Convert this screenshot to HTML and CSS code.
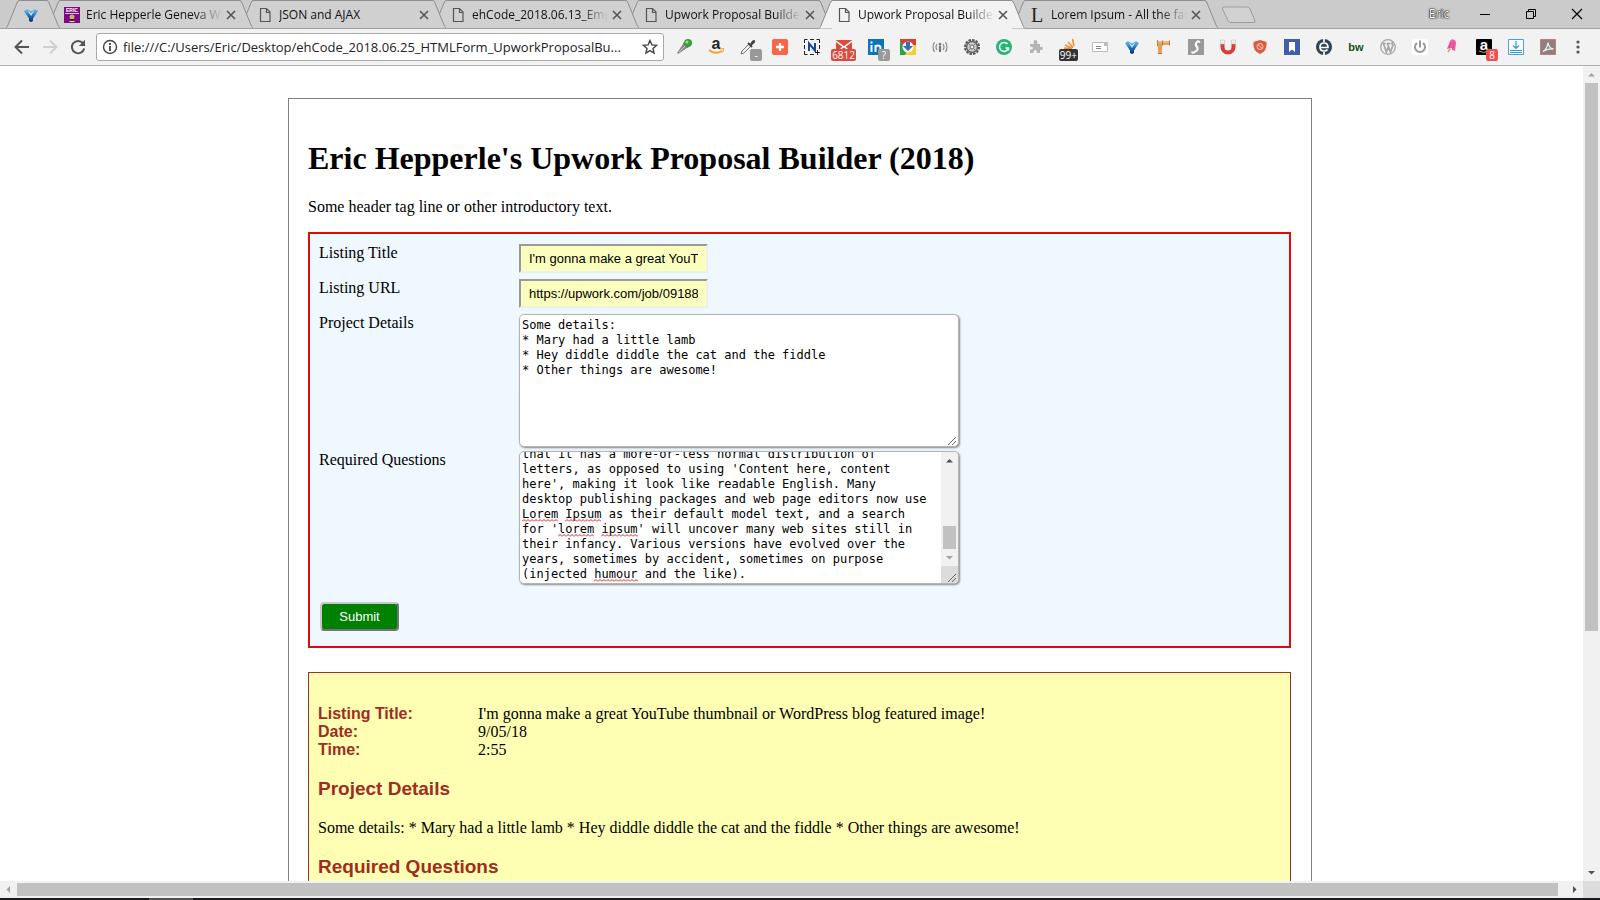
FILE: index.html
```html
<!DOCTYPE html>
<html lang="en">
<head>
<meta charset="utf-8">
<title>Upwork Proposal Builder</title>
<link rel="stylesheet" href="styles.css">
</head>
<body>
<svg class="defs" aria-hidden="true">
  <linearGradient id="blue" x1="0" y1="0" x2="0" y2="1"><stop offset="0" stop-color="#7cc4f2"/><stop offset=".5" stop-color="#1c74c4"/><stop offset="1" stop-color="#0a2a5c"/></linearGradient>
  <symbol id="gem" viewBox="0 0 16 16"><path d="M1 4 4 2l4 2.500L12 2l3 2-5 7.500V14l-2 1-2-1v-2.500z" fill="url(#blue)"/><path d="M4.500 3.500 8 6l3.500-2.500L8 9z" fill="#bfe6ff"/></symbol>
  <symbol id="doc" viewBox="0 0 16 16"><path d="M3.500 1.500h6l3.500 3.500v9.500h-9.500zM9.500 1.500v4H13" fill="none" stroke="#555" stroke-width="1.200"/></symbol>
  <symbol id="close" viewBox="0 0 10 10"><path d="M1 1l8 8M9 1 1 9" stroke="#555" stroke-width="1.600"/></symbol>
  <symbol id="edge-l" viewBox="0 0 13 28"><path d="M0 28C1 27 1 27 2 25L11 3Q12 1 13 1V28z" fill="currentColor"/><path d="M0 28C1 27 1 27 2 25L11 3Q12 .500 13 .500" fill="none" stroke="#8e8e8e"/></symbol>
  <symbol id="edge-r" viewBox="0 0 13 28"><path d="M13 28C12 27 12 27 11 25L2 3Q1 1 0 1V28z" fill="currentColor"/><path d="M13 28C12 27 12 27 11 25L2 3Q1 .500 0 .500" fill="none" stroke="#8e8e8e"/></symbol>
</svg>

<header class="tabstrip">
  <nav class="tabs" aria-label="Tabs">
    <div class="tab pinned"><svg class="edge"><use href="#edge-l"/></svg><div class="tab-mid"><svg class="fav"><use href="#gem"/></svg></div><svg class="edge"><use href="#edge-r"/></svg></div>
    <div class="tab t2"><svg class="edge"><use href="#edge-l"/></svg><div class="tab-mid"><svg class="fav" viewBox="0 0 16 16"><path fill="#7d0a80" d="M0 0h16v16H0z"/><text x="8" y="5" font-size="5" font-weight="700" text-anchor="middle" fill="#fff">ERIC</text><path d="M1 6.500h14" stroke="#e3b6e3"/><circle cx="8" cy="10" r="2.500" fill="#c9b176"/><path d="M5 15q3-5 6 0z" fill="#e8e0d8"/><path d="M6 12h4v2H6z" fill="#3c2530"/></svg><span class="title">Eric Hepperle Geneva We</span><button class="x" aria-label="Close tab"><svg><use href="#close"/></svg></button></div><svg class="edge"><use href="#edge-r"/></svg></div>
    <div class="tab t3"><svg class="edge"><use href="#edge-l"/></svg><div class="tab-mid"><svg class="fav"><use href="#doc"/></svg><span class="title">JSON and AJAX</span><button class="x" aria-label="Close tab"><svg><use href="#close"/></svg></button></div><svg class="edge"><use href="#edge-r"/></svg></div>
    <div class="tab t4"><svg class="edge"><use href="#edge-l"/></svg><div class="tab-mid"><svg class="fav"><use href="#doc"/></svg><span class="title">ehCode_2018.06.13_Emp</span><button class="x" aria-label="Close tab"><svg><use href="#close"/></svg></button></div><svg class="edge"><use href="#edge-r"/></svg></div>
    <div class="tab t5"><svg class="edge"><use href="#edge-l"/></svg><div class="tab-mid"><svg class="fav"><use href="#doc"/></svg><span class="title">Upwork Proposal Builder</span><button class="x" aria-label="Close tab"><svg><use href="#close"/></svg></button></div><svg class="edge"><use href="#edge-r"/></svg></div>
    <div class="tab active"><svg class="edge"><use href="#edge-l"/></svg><div class="tab-mid"><svg class="fav"><use href="#doc"/></svg><span class="title">Upwork Proposal Builder</span><button class="x" aria-label="Close tab"><svg><use href="#close"/></svg></button></div><svg class="edge"><use href="#edge-r"/></svg></div>
    <div class="tab t7"><svg class="edge"><use href="#edge-l"/></svg><div class="tab-mid"><svg class="fav" viewBox="0 0 16 16"><text class="serif" x="8" y="15" font-size="20" text-anchor="middle" fill="#222">L</text></svg><span class="title">Lorem Ipsum - All the fac</span><button class="x" aria-label="Close tab"><svg><use href="#close"/></svg></button></div><svg class="edge"><use href="#edge-r"/></svg></div>
    <button class="newtab" aria-label="New tab"><svg viewBox="0 0 36 18"><path d="M3 1h23q2 0 3 2l5 12q.500 1.500-1 1.500H10q-2 0-3-2L1.500 3Q1 1 3 1z" fill="#d2d2d2" stroke="#9c9c9c"/></svg></button>
  </nav>
  <div class="window">
    <button class="user">Eric</button>
    <button aria-label="Minimize"><svg viewBox="0 0 12 12"><path d="M1 6.500h10" stroke="#000"/></svg></button>
    <button aria-label="Restore"><svg viewBox="0 0 12 12"><path d="M1.500 3.500h7v7h-7zM3.500 3.500v-2h7v7h-2" fill="none" stroke="#000"/></svg></button>
    <button aria-label="Close"><svg viewBox="0 0 12 12"><path d="M1 1l10 10M11 1 1 11" stroke="#000" stroke-width="1.200"/></svg></button>
  </div>
</header>

<div class="toolbar">
  <button class="nav" aria-label="Back"><svg viewBox="0 0 16 16"><path d="M15 8H2M8 1.500 1.500 8 8 14.500" fill="none" stroke="#555" stroke-width="2"/></svg></button>
  <button class="nav" aria-label="Forward"><svg viewBox="0 0 16 16"><path d="M1 8h13M8 1.500 14.500 8 8 14.500" fill="none" stroke="#d0d0d0" stroke-width="2"/></svg></button>
  <button class="nav" aria-label="Reload"><svg viewBox="0 0 16 16"><path d="M13 4.200A6.200 6.200 0 1 0 14.200 9.500" fill="none" stroke="#555" stroke-width="2"/><path d="M15 .800V7H8.800z" fill="#555"/></svg></button>
  <div class="address">
    <svg viewBox="0 0 16 16"><circle cx="8" cy="8" r="6.500" fill="none" stroke="#444" stroke-width="1.400"/><path d="M8 7v5M8 4v2" stroke="#444" stroke-width="1.800"/></svg>
    <input type="text" aria-label="Address" value="file:///C:/Users/Eric/Desktop/ehCode_2018.06.25_HTMLForm_UpworkProposalBu...">
    <button aria-label="Bookmark"><svg viewBox="0 0 16 16"><path d="m8 1.500 1.900 4.400 4.700.400-3.600 3.100 1.100 4.600L8 11.600 3.900 14l1.100-4.600-3.600-3.100 4.700-.400z" fill="none" stroke="#444" stroke-width="1.400"/></svg></button>
  </div>
  <div class="exts">
    <button aria-label="Microphone"><svg viewBox="0 0 16 16"><path d="m1 14 6-9 4 4-9 6z" fill="#888"/><path d="m3 13 6-6" stroke="#ccc"/><path d="m7 5 4 4 2-1-5-5z" fill="#555"/><circle cx="12" cy="4" r="4" fill="#3c9c3c"/><circle cx="11" cy="3" r="1.500" fill="#9edc8c"/></svg></button>
    <button aria-label="Amazon"><svg viewBox="0 0 16 16"><text x="8" y="10" font-size="16" font-weight="700" text-anchor="middle" fill="#222">a</text><path d="M1 11q6 5 13 1" fill="none" stroke="#f0a030" stroke-width="2"/><path d="m12 10 4-.500-1.500 4" fill="none" stroke="#f0a030"/></svg></button>
    <button aria-label="Color picker"><svg viewBox="0 0 16 16"><path d="m1 15 1-3 7-7 2 2-7 7z" fill="#eee" stroke="#777"/><path d="m8 4 4 4" stroke="#444" stroke-width="2"/><path d="m9.500 5.500 3-4q2-1 2.500 0 .500 1-.500 2.500l-3.500 3z" fill="#444"/></svg><span class="badge gray">-</span></button>
    <button aria-label="Add"><svg viewBox="0 0 16 16"><rect width="16" height="16" rx="2" fill="#fa6549"/><path d="M8 4v8M4 8h8" stroke="#fff" stroke-width="2.400"/></svg></button>
    <button aria-label="Nimbus"><svg viewBox="0 0 16 16"><path d="M.500 4V.500h3M6 .500h4M12.500.500h3V4M15.500 6v4M.500 6v4M.500 12v3.500h3M6 15.500h4" fill="none" stroke="#222"/><path d="M5 12V4.500L11 11.500V4" fill="none" stroke="#174a96" stroke-width="2"/><path d="M13.500 11v5M11 13.500h5" stroke="#222"/></svg></button>
    <button aria-label="Mail"><svg viewBox="0 0 16 16"><path d="M0 1h16v13H0z" fill="#dd4b3e"/><path d="m0 2 8 6 8-6M1 14l6-6m8 6L9 8" fill="none" stroke="#fff" stroke-width="1.500"/></svg><span class="badge mail">6812</span></button>
    <button aria-label="LinkedIn"><svg viewBox="0 0 16 16"><path fill="#0b76b7" d="M0 0h16v16H0z"/><path d="M3.500 6v7M3.500 2.500v2M7.500 13V6m0 3q0-2.500 2.500-2.500T12.500 9v4" fill="none" stroke="#fff" stroke-width="2"/></svg><span class="badge gray">?</span></button>
    <button aria-label="Chrome download"><svg viewBox="0 0 16 16"><path fill="#dc3c32" d="M0 0h16v6H0z"/><path fill="#2da14b" d="M0 1v15h8z"/><path fill="#f7ce28" d="M16 6v10H5l5-10z"/><circle cx="8" cy="8" r="5.500" fill="#f5f5f5"/><path d="M6 3h4v4h3l-5 5-5-5h3z" fill="#386ab6"/></svg></button>
    <button aria-label="Broadcast"><svg viewBox="0 0 16 16"><path d="M2.500 3q-3 5 0 10M5 5q-2 3 0 6M13.500 3q3 5 0 10M11 5q2 3 0 6" fill="none" stroke="#888" stroke-width="1.200"/><circle cx="8" cy="5" r="1.300" fill="#777"/><path d="M8 6.500V13" stroke="#777" stroke-width="2.200"/></svg></button>
    <button aria-label="Settings"><svg viewBox="0 0 16 16"><circle cx="8" cy="8" r="7" fill="none" stroke="#555" stroke-width="2" stroke-dasharray="2.500 1.150"/><circle cx="8" cy="8" r="5.500" fill="#ccc" stroke="#666" stroke-width="1.500"/><circle cx="8" cy="8" r="2" fill="#f2f2f2" stroke="#666"/><path d="m4 4 2 2m4 4 2 2m0-8-2 2m-4 4-2 2" stroke="#777"/></svg></button>
    <button aria-label="Grammarly"><svg viewBox="0 0 16 16"><circle cx="8" cy="8" r="8" fill="#24b574"/><path d="M11.500 5A4.500 4.500 0 1 0 12.400 9H9.500M12.500 8.500v3" fill="none" stroke="#fff" stroke-width="1.500"/></svg></button>
    <button aria-label="Extension"><svg viewBox="0 0 16 16"><path d="M2 5h4q-1-4 1.500-4T9 5h3v3q3-1 3 1.300T12 11v3H9q0-3-1.800-3T5.500 14H2v-3.500q3 0 3-1.500T2 7.500z" fill="#b4b4b4"/></svg></button>
    <button aria-label="Stack Overflow"><svg viewBox="0 0 16 16"><path d="m4 9 8 1M5 6l7 3.500M8 3l5 5.500M12.500 0l1.500 7" stroke="#f08a25" stroke-width="1.500"/></svg><span class="badge dark">99+</span></button>
    <button aria-label="Note"><svg viewBox="0 0 16 16"><path d="M.500 3.500h15v9H.500z" fill="#fff" stroke="#bbb"/><path d="M4 7.500h5M4 9.500h5" stroke="#888"/><path d="M12 4h3v3h-3z" fill="#bbb"/></svg></button>
    <button aria-label="Gem"><svg><use href="#gem"/></svg></button>
    <button aria-label="Pipe"><svg viewBox="0 0 16 16"><path d="M1 2h13v4H6v9H2V6H1z" fill="#e3a05c"/><path d="M2 3h11" stroke="#f6cfa2"/><path d="M1.500 1v6M6.500 1.500v5M13.500 1.500v5M2 14.500h4" stroke="#b9783a"/></svg></button>
    <button aria-label="Script"><svg viewBox="0 0 16 16"><path fill="#999" d="M0 0h16v16H0z"/><path d="M12 3.500Q10 1 8.500 3.500T9 8t-1.500 4.500T4 12.500" fill="none" stroke="#fff" stroke-width="2"/></svg></button>
    <button aria-label="Magnet"><svg viewBox="0 0 16 16"><path d="M2.500 5v3a5.500 5.500 0 0 0 11 0V5" fill="none" stroke="#d83c3c" stroke-width="4"/><path d="M.500 1h4v4h-4zM11.500 1h4v4h-4z" fill="#eee" stroke="#bbb" stroke-width=".500"/></svg></button>
    <button aria-label="Shield"><svg viewBox="0 0 16 16"><path d="m8 1 6.500 2q1 9-6.500 12Q.500 12 1.500 3z" fill="#e0583e"/><circle cx="8" cy="7.500" r="3" fill="none" stroke="#ffd9c9"/><path d="m6 5.500 4 4" stroke="#ffd9c9"/></svg></button>
    <button aria-label="Bookmark manager"><svg viewBox="0 0 16 16"><path fill="#3f5fac" d="M0 0h16v16H0z"/><path d="M5 3h6v10L8 10.500 5 13z" fill="#fff"/></svg></button>
    <button aria-label="E"><svg viewBox="0 0 16 16"><circle cx="8" cy="8" r="8" fill="#2f4454"/><path d="M4.500 8.500H12Q12 4 8 4T4 8t4 4q2.500 0 3.500-1.500M8 0v3M8 13v3" fill="none" stroke="#fff" stroke-width="1.700"/></svg></button>
    <button aria-label="BuiltWith"><svg viewBox="0 0 16 16"><text x="8" y="12" font-size="11" font-weight="700" text-anchor="middle" fill="#14500f">bw</text></svg></button>
    <button aria-label="WordPress"><svg viewBox="0 0 16 16"><circle cx="8" cy="8" r="7.300" fill="#f2f2f2" stroke="#a5a5a5" stroke-width="1.300"/><path d="M2.500 4.500h3M6.500 4.500h4M3.500 5l3 8L8.300 8M7.500 5l3 8 2.500-7q-2-2 0-3" fill="none" stroke="#a5a5a5" stroke-width="1.700"/></svg></button>
    <button aria-label="Power"><svg viewBox="0 0 16 16"><rect width="16" height="16" rx="3" fill="#fff"/><path d="M5 4a5 5 0 1 0 6 0M8 1.500v7" fill="none" stroke="#999" stroke-width="2"/></svg></button>
    <button aria-label="Popsicle"><svg viewBox="0 0 16 16"><path d="M6 10 4 13" stroke="#c99f7b" stroke-width="1.500"/><path d="m3 10 3-8q2-3 4-1 2 0 2 3l-1 8-3-1V9z" fill="#ec5fa4"/><path d="m7 3-2 6M10 3l-1 6" stroke="#d04a8c"/></svg></button>
    <button aria-label="Amazon assistant"><svg viewBox="0 0 16 16"><rect width="16" height="16" rx="1" fill="#000"/><text x="8" y="11" font-size="15" font-weight="700" text-anchor="middle" fill="#fff">a</text><path d="M3 12q5 3 9 0" fill="none" stroke="#f0a030"/></svg><span class="badge red">8</span></button>
    <button aria-label="Download"><svg viewBox="0 0 16 16"><path d="M.500.500h15v15H.500z" fill="#f8fcff" stroke="#4aa0d8"/><path d="M8 2v7M5 6.500 8 9.500l3-3M2 11.500h12M2 13.500h12" fill="none" stroke="#3f94cc" stroke-width="1.200"/></svg></button>
    <button aria-label="Acrobat"><svg viewBox="0 0 16 16"><path d="M.500.500h15v15H.500z" fill="#8c8080" stroke="#c97878"/><path d="M3 12.500q4-2 5-9 1 6 5.500 6.500Q8 9 3 12.500z" fill="none" stroke="#eee" stroke-width="1.300"/></svg></button>
  </div>
  <button class="nav" aria-label="Menu"><svg viewBox="0 0 16 16"><circle cx="8" cy="3" r="1.600" fill="#555"/><circle cx="8" cy="8" r="1.600" fill="#555"/><circle cx="8" cy="13" r="1.600" fill="#555"/></svg></button>
</div>

<div class="viewport">
  <div class="document">
    <main class="card">
      <h1>Eric Hepperle's Upwork Proposal Builder (2018)</h1>
      <p>Some header tag line or other introductory text.</p>
      <form class="builder">
        <label for="title">Listing Title</label>
        <input id="title" type="text" value="I'm gonna make a great YouTube thumbnail or WordPress blog featured image!">
        <label for="url">Listing URL</label>
        <input id="url" type="text" value="https://upwork.com/job/091882345">
        <label for="details">Project Details</label>
        <div class="area">
          <textarea id="details" spellcheck="false">Some details:
* Mary had a little lamb
* Hey diddle diddle the cat and the fiddle
* Other things are awesome!</textarea>
          <svg class="grip" viewBox="0 0 10 10"><path d="M1 9 9 1M5 9l4-4" stroke="#666"/></svg>
        </div>
        <label for="questions">Required Questions</label>
        <div class="area scrolled">
          <textarea id="questions" spellcheck="false">It is a long established fact that a reader will be distracted by the readable content of a page when looking at its layout. The point of using Lorem Ipsum is
that it has a more-or-less normal distribution of letters, as opposed to using 'Content here, content here', making it look like readable English. Many desktop publishing packages and web page editors now use Lorem Ipsum as their default model text, and a search for 'lorem ipsum' will uncover many web sites still in their infancy. Various versions have evolved over the years, sometimes by accident, sometimes on purpose (injected humour and the like).</textarea>
          <i class="typo w1"></i><i class="typo w2"></i><i class="typo w3"></i><i class="typo w4"></i><i class="typo w5"></i>
          <div class="mini-bar"><svg viewBox="0 0 17 17"><path d="M5 10.500 8.500 7l3.500 3.500z" fill="#505050"/></svg><div class="mini-track"><div class="thumb"></div></div><svg viewBox="0 0 17 17"><path d="M5 7h7l-3.500 3.500z" fill="#a3a3a3"/></svg><div class="mini-corner"></div></div>
          <svg class="grip" viewBox="0 0 10 10"><path d="M1 9 9 1M5 9l4-4" stroke="#666"/></svg>
        </div>
        <button class="submit" type="submit">Submit</button>
      </form>
      <section class="result">
        <dl>
          <dt>Listing Title:</dt><dd>I'm gonna make a great YouTube thumbnail or WordPress blog featured image!</dd>
          <dt>Date:</dt><dd>9/05/18</dd>
          <dt>Time:</dt><dd>2:55</dd>
        </dl>
        <h3>Project Details</h3>
        <p>Some details: * Mary had a little lamb * Hey diddle diddle the cat and the fiddle * Other things are awesome!</p>
        <h3>Required Questions</h3>
      </section>
    </main>
  </div>
  <div class="vbar"><svg viewBox="0 0 17 17"><path d="M5 10.500 8.500 7l3.500 3.500z" fill="#a3a3a3"/></svg><div class="thumb"></div><div class="rest"></div><svg viewBox="0 0 17 17"><path d="M5 7h7l-3.500 3.500z" fill="#505050"/></svg></div>
  <div class="hbar"><svg viewBox="0 0 17 17"><path d="M10 5v7L6.500 8.500z" fill="#a3a3a3"/></svg><div class="thumb"></div><div class="rest"></div><svg viewBox="0 0 17 17"><path d="M7 5v7l3.500-3.500z" fill="#505050"/></svg></div>
  <div class="corner"></div>
</div>
<footer class="taskbar"><div></div></footer>
<script src="script.js"></script>
</body>
</html>
```
FILE: styles.css
```css
* { box-sizing: border-box; }
body { margin: 0; height: 100vh; display: flex; flex-direction: column; overflow: hidden; background: #fff; color: #000; font: 16px/18px "Liberation Serif", "Times New Roman", serif; }
button { border: 0; padding: 0; background: none; }
svg { display: block; }
.defs { position: absolute; width: 0; height: 0; }
svg text { font-family: "Liberation Sans", Arial, sans-serif; }
svg text.serif { font-family: "Liberation Serif", serif; }

/* tab strip */
.tabstrip { flex: none; display: flex; justify-content: space-between; height: 29px; padding-left: 6px; background: #cbcbcb; border-bottom: 1px solid #a0a0a0; font: 12px/16px "Open Sans", "Noto Sans", sans-serif; }
.tabs { display: flex; flex: 1; min-width: 0; }
.tab { position: relative; display: flex; flex: 0 1 206px; min-width: 0; height: 28px; margin-right: -13px; color: #d0d0d0; }
.tab.pinned { flex: 0 0 54px; z-index: 7; }
.t2 { z-index: 6; }
.t3 { z-index: 5; }
.t4 { z-index: 4; }
.t5 { z-index: 3; }
.t7 { z-index: 1; }
.tab.active { z-index: 8; height: 29px; color: #f2f2f2; }
.edge { flex: none; width: 13px; height: 28px; }
.active .edge { height: 29px; }
.tab-mid { flex: 1; min-width: 0; display: flex; align-items: center; background: currentColor; border-top: 1px solid #8e8e8e; padding: 0 4px; }
.fav { flex: none; width: 16px; height: 16px; }
.title { flex: 1; min-width: 0; margin: 0 4px 0 6px; overflow: hidden; white-space: nowrap; color: #111; mask-image: linear-gradient(to right, #000 80%, transparent); }
.t3 .title { mask-image: none; }
.x { flex: none; width: 10px; height: 10px; }
.x svg { width: 10px; height: 10px; }
.newtab { flex: none; margin: 6px 0 0 16px; height: 18px; }
.newtab svg { width: 36px; height: 18px; }
.window { flex: none; display: flex; align-items: center; }
.window button { width: 46px; height: 26px; display: grid; place-items: center; }
.window .user { width: 46px; font: 12px/16px "Open Sans", "Noto Sans", sans-serif; color: #fff; text-shadow: 0 0 1px #000, 0 0 1px #000, 0 0 2px #000; }
.window svg { width: 12px; height: 12px; }

/* toolbar */
.toolbar { flex: none; display: flex; align-items: center; height: 37px; padding: 0 8px; background: #f2f2f2; border-bottom: 1px solid #b0b0b0; }
.nav { flex: none; width: 28px; height: 28px; display: grid; place-items: center; }
.nav svg { width: 16px; height: 16px; }
.address { flex: 1; min-width: 0; display: flex; align-items: center; height: 28px; margin: 0 4px; padding: 0 5px; background: #fff; border: 1px solid #a9a9a9; border-radius: 3px; }
.address svg { flex: none; width: 16px; height: 16px; }
.address input { flex: 1; min-width: 0; margin-left: 5px; padding: 0; border: 0; outline: 0; background: none; color: #222; font: 13px/20px "Open Sans", "Noto Sans", sans-serif; }
.exts { flex: none; display: flex; }
.exts button { position: relative; width: 32px; height: 28px; display: grid; place-items: center; }
.exts svg { width: 16px; height: 16px; }
.badge { position: absolute; right: 2px; bottom: 0; min-width: 12px; padding: 0 3px; border-radius: 2px; color: #fff; font: 10px/12px "Open Sans", "Noto Sans", sans-serif; }
.badge.gray { background: #999; }
.badge.mail { right: 4px; padding: 0 1px; background: #dd4b3e; }
.badge.dark { right: 6px; padding: 0 1px; background: #333; }
.badge.red { background: #f05050; }

/* page area */
.viewport { flex: 1; min-height: 0; display: grid; grid-template: minmax(0, 1fr) 17px / minmax(0, 1fr) 17px; }
.document { overflow: hidden; display: flex; justify-content: center; padding: 32px 0 0 17px; }
.card { flex: none; width: 1024px; max-width: 100%; height: max-content; padding: 20px 20px 20px 19px; border: 1px solid #808080; }
h1 { margin: 21px 0; font-size: 32px; line-height: 37px; }
.card p { margin: 16px 0; }
.builder { display: grid; grid-template-columns: 200px minmax(0, 1fr); align-items: start; margin-bottom: 24px; padding: 10px 9px 15px; border: 2px solid #dc0c0c; background: #eff7ff; }
.builder input { width: 189px; height: 29px; margin: 0 0 6px; padding: 0 8px; border: 2px inset #eee; outline: 0; background: #faffbd; color: #000; font: 13px/16px "Liberation Sans", Arial, sans-serif; }
.area { position: relative; width: 440px; max-width: 100%; height: 133px; margin-bottom: 4px; border: 1px solid #b4b4b4; border-radius: 5px; box-shadow: 1px 1px 2px #888; background: #fff; overflow: hidden; font: 12px/15px "DejaVu Sans Mono", monospace; }
.area textarea { display: block; width: 100%; height: 100%; margin: 0; padding: 3px 2px 1px; border: 0; outline: 0; resize: none; overflow: hidden; background: none; color: #000; font: inherit; }
.area.scrolled textarea { padding-right: 27px; }
.grip { position: absolute; right: 1px; bottom: 0; width: 10px; height: 10px; }
.mini-bar { position: absolute; top: 0; right: 0; bottom: 0; width: 17px; display: flex; flex-direction: column; background: #f1f1f1; }
.mini-bar svg { flex: none; width: 17px; height: 17px; }
.mini-track { flex: 1; display: flex; flex-direction: column; justify-content: flex-end; padding: 0 2px; }
.mini-track .thumb { height: 23px; }
.mini-corner { flex: none; height: 17px; background: #dcdcdc; }
.thumb { background: #c1c1c1; }
.typo { position: absolute; width: 5ch; height: 3px; background: url("data:image/svg+xml,%3Csvg xmlns='http://www.w3.org/2000/svg' width='4' height='3'%3E%3Cpath d='M0 2.500 2 .500 4 2.500' fill='none' stroke='%23e02020'/%3E%3C/svg%3E") repeat-x; }
.w1 { left: 2px; bottom: 61px; }
.w2 { left: calc(2px + 6ch); bottom: 61px; }
.w3 { left: calc(2px + 5ch); bottom: 46px; }
.w4 { left: calc(2px + 11ch); bottom: 46px; }
.w5 { left: calc(2px + 10ch); bottom: 1px; width: 6ch; }
.submit { grid-column: 1; width: 79px; height: 29px; margin: 14px 0 0 1px; border: 2px outset #c8c8c8; border-radius: 4px; background: #008000; color: #fff; font: 13px/16px "Liberation Sans", Arial, sans-serif; }
.result { padding: 32px 9px; border: 1px solid #9a3324; background: #ffffb3; }
.result dl { display: grid; grid-template-columns: 160px minmax(0, 1fr); margin: 0; }
.result dt, .result h3 { color: #a02c22; font-family: "Liberation Sans", Arial, sans-serif; font-weight: 700; }
.result dd { margin: 0; }
.result h3 { margin: 19px 0; font-size: 19px; line-height: 22px; }
.result p { margin: 18px 0; }

/* scroll bars */
.vbar, .hbar { display: flex; background: #f1f1f1; }
.vbar { flex-direction: column; }
.vbar svg, .hbar svg { flex: none; width: 17px; height: 17px; }
.vbar .thumb { flex: 548; margin: 0 2px; }
.vbar .rest { flex: 233; }
.hbar .thumb { flex: 1541; margin: 2px 0; }
.hbar .rest { flex: 8; }
.corner { background: #dcdcdc; }
.taskbar { flex: none; height: 2px; padding-left: 149px; background: #1b1b1d; }
.taskbar div { width: 44px; height: 2px; background: #505050; }
```
FILE: script.js
```js
const questions = document.getElementById("questions");
questions.scrollTop = questions.scrollHeight;
```
